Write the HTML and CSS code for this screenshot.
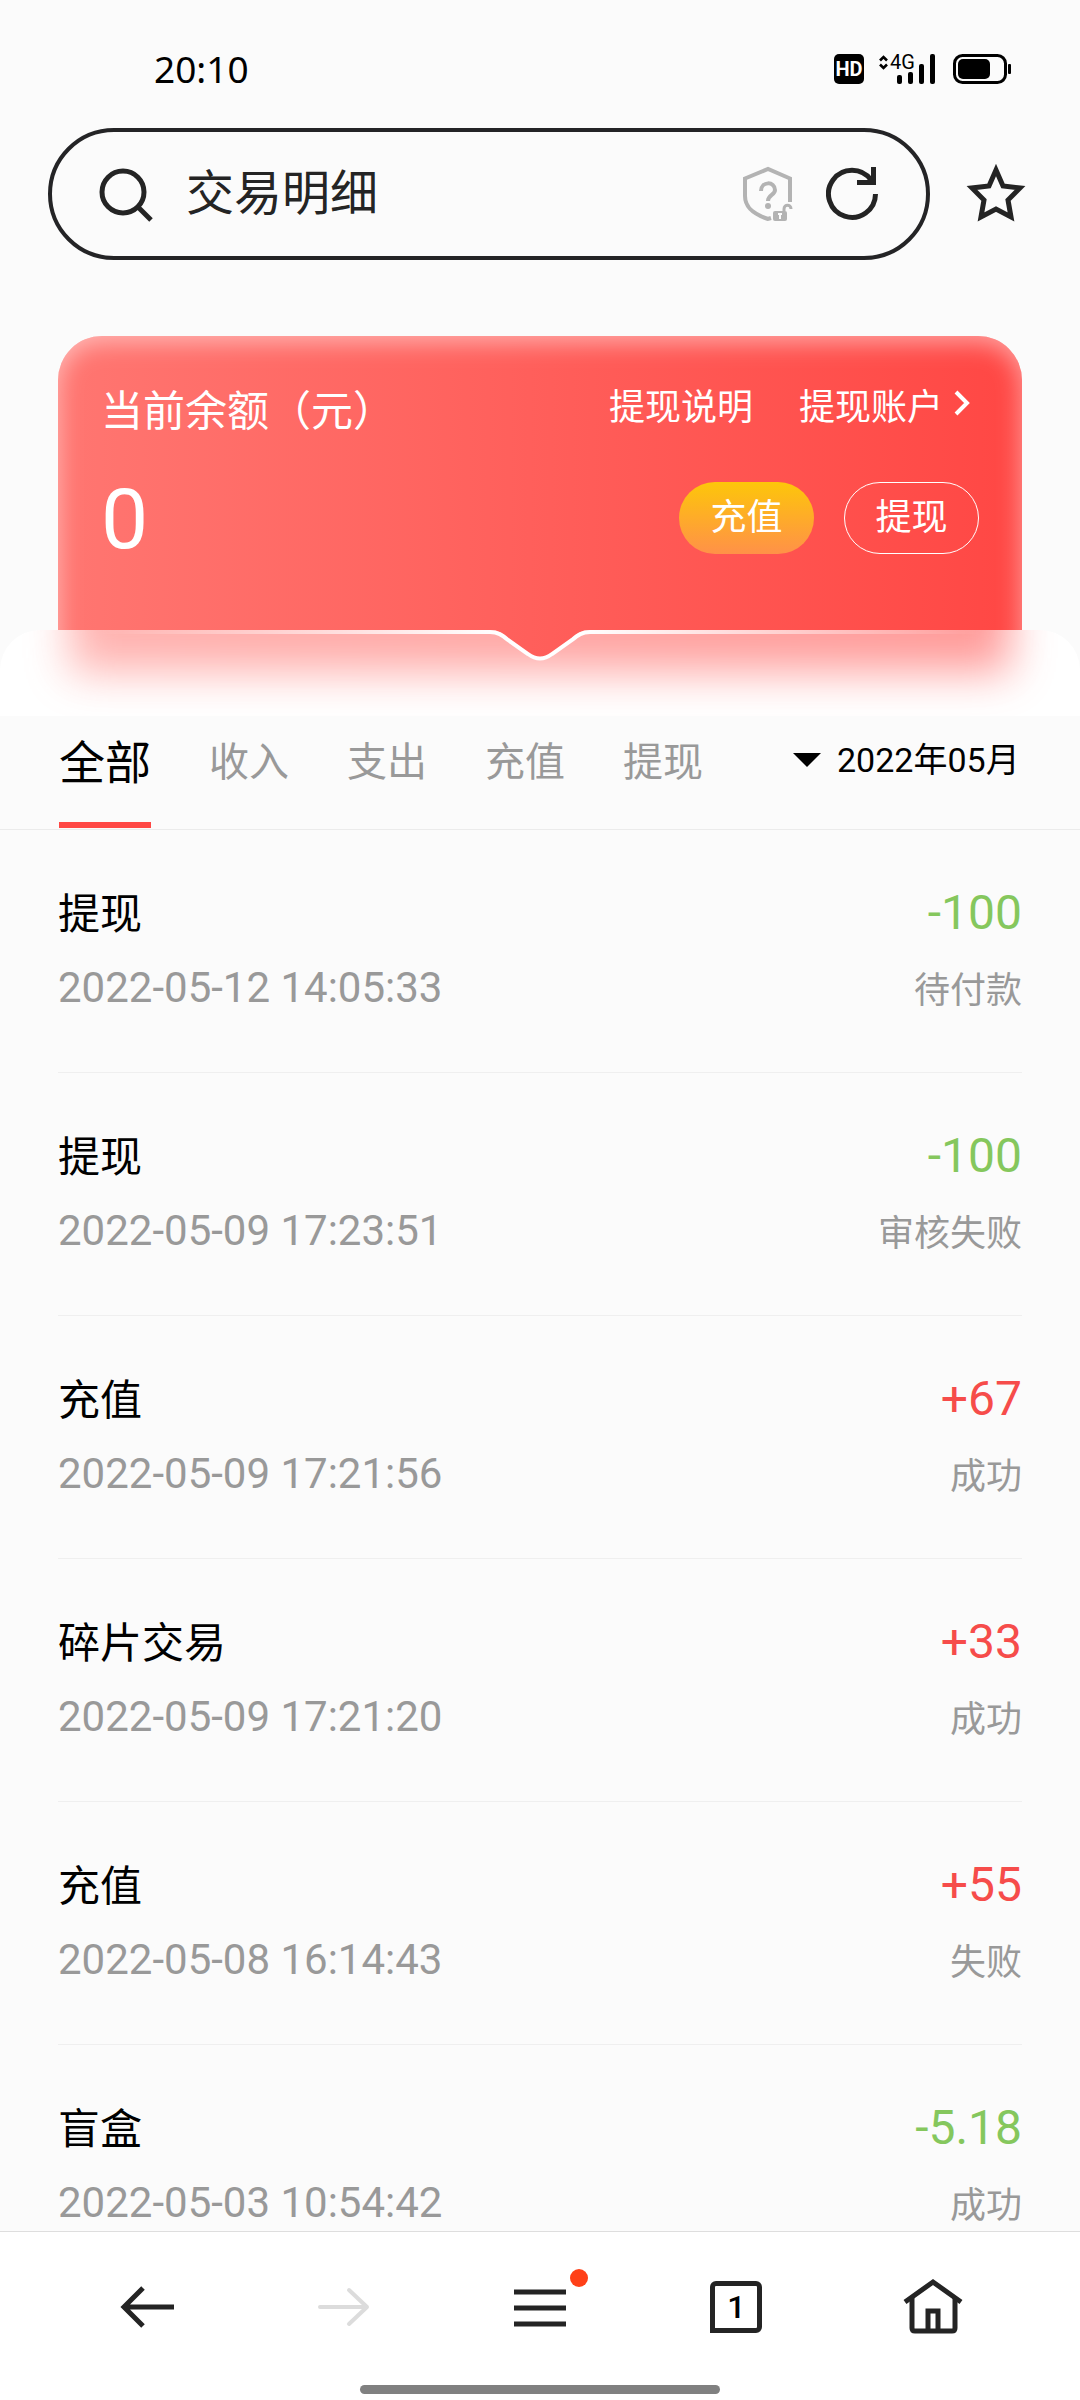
FILE: index.html
```html
<!DOCTYPE html>
<html lang="zh-CN">
<head>
    <meta charset="UTF-8">
    <meta name="viewport" content="width=device-width, initial-scale=1.0">
    <title>交易明细</title>
    <link rel="stylesheet" href="styles.css">
</head>
<body>
    <div class="status-bar">
        <time class="clock">20:10</time>
        <div class="status-icons">
            <span class="hd-badge">HD</span>
            <svg class="signal" width="56" height="30" viewBox="0 0 56 30">
                <path d="M1 6.500L4.500 3L8 6.500M1 10.500L4.500 14L8 10.500" fill="none" stroke="#000" stroke-width="2.600"/>
                <text class="signal-text" x="11" y="15">4G</text>
                <rect x="18" y="21" width="5" height="9" rx="2"/>
                <rect x="29" y="18" width="5" height="12" rx="2"/>
                <rect x="40" y="10" width="5" height="20" rx="2"/>
                <rect x="51" y="0" width="5" height="30" rx="2"/>
            </svg>
            <svg class="battery" width="58" height="30" viewBox="0 0 58 30">
                <rect x="1.500" y="1.500" width="51" height="27" rx="8" fill="none" stroke="#000" stroke-width="3"/>
                <rect x="5" y="5" width="32" height="20" rx="5"/>
                <rect x="55" y="10" width="3" height="10" rx="1"/>
            </svg>
        </div>
    </div>

    <header class="browser-bar">
        <form class="search-box">
            <svg width="56" height="56" viewBox="0 0 56 56" fill="none" stroke="#242424" stroke-width="5">
                <circle cx="25" cy="26" r="21"/>
                <path d="M40 41L53 54"/>
            </svg>
            <input class="search-input" type="text" value="交易明细" aria-label="搜索">
            <button class="icon-btn" type="button" aria-label="安全提示">
                <svg width="52" height="56" viewBox="0 0 52 56" fill="none" stroke="#b3b3b3" stroke-width="4">
                    <path d="M48 36V12.500L26 3L3 12.500V30C3 43 14 49 26 53L29 52"/>
                    <path d="M19 25C19 15 33 15 33 24C33 29 26 29 26 35"/>
                    <circle cx="26" cy="40" r="3" fill="#b3b3b3" stroke="none"/>
                    <rect x="31" y="45" width="14" height="10" rx="2" fill="#b3b3b3" stroke="none"/>
                    <path d="M42 45V43C42 38 49 38 49 43" stroke-width="3"/>
                    <path d="M36 48H40M38 48V53" stroke="#fbfbfb" stroke-width="2"/>
                </svg>
            </button>
            <button class="icon-btn" type="button" aria-label="刷新">
                <svg width="54" height="56" viewBox="0 0 54 56" fill="none" stroke="#242424" stroke-width="5">
                    <path d="M49.500 28A23.500 23.500 0 1 1 45 14"/>
                    <path d="M31 16.500H47M47.500 1V19"/>
                </svg>
            </button>
        </form>
        <button class="icon-btn" type="button" aria-label="收藏">
            <svg width="60" height="60" viewBox="0 0 60 60" fill="none" stroke="#242424" stroke-width="5">
                <path d="M30 6L37 22L54 24L42 36L45 53L30 45L15 53L18 36L6 24L23 22Z"/>
            </svg>
        </button>
    </header>

    <section class="balance">
        <div class="balance-card">
            <div class="balance-row">
                <h1 class="balance-title">当前余额（元）</h1>
                <div class="balance-links">
                    <a href="#explain">提现说明</a>
                    <a href="#account">提现账户<svg class="chevron" width="18" height="28" viewBox="0 0 18 28" fill="none" stroke="#fff" stroke-width="4"><path d="M3 3L14 14L3 25"/></svg></a>
                </div>
            </div>
            <div class="balance-row">
                <div class="balance-value">0</div>
                <div class="balance-actions">
                    <button class="pill pill-gold" type="button">充值</button>
                    <button class="pill pill-outline" type="button">提现</button>
                </div>
            </div>
        </div>
        <div class="frost"></div>
        <svg class="notch" viewBox="0 0 1080 32" preserveAspectRatio="xMidYMin slice">
            <defs>
                <linearGradient id="card" gradientUnits="userSpaceOnUse" x1="58" y1="0" x2="1022" y2="0">
                    <stop offset="0" stop-color="#ff7671"/>
                    <stop offset="1" stop-color="#ff4744"/>
                </linearGradient>
                <linearGradient id="edge" gradientUnits="userSpaceOnUse" x1="100" y1="0" x2="980" y2="0">
                    <stop offset="0" stop-color="#fff" stop-opacity="0"/>
                    <stop offset="0.450" stop-color="#fff"/>
                    <stop offset="0.550" stop-color="#fff"/>
                    <stop offset="1" stop-color="#fff" stop-opacity="0"/>
                </linearGradient>
            </defs>
            <path d="M490 0C498 0 502 3 508 8L528 23C536 29 544 29 552 23L572 8C578 3 582 0 590 0Z" fill="url(#card)"/>
            <path d="M100 2H490C498 2 502 5 508 10L528 24C536 30 544 30 552 24L572 10C578 5 582 2 590 2H980" fill="none" stroke="url(#edge)" stroke-width="4"/>
        </svg>
    </section>

    <nav class="filter-bar">
        <div class="tabs">
            <button class="tab active" type="button">全部</button>
            <button class="tab" type="button">收入</button>
            <button class="tab" type="button">支出</button>
            <button class="tab" type="button">充值</button>
            <button class="tab" type="button">提现</button>
        </div>
        <label class="month">
            <svg width="28" height="14" viewBox="0 0 28 14"><path d="M0 0H28L14 14Z"/></svg>
            <select class="month-select" aria-label="月份">
                <option>2022年05月</option>
            </select>
        </label>
    </nav>

    <ul class="records">
        <li class="record">
            <div class="record-line"><span class="name">提现</span><span class="amount out">-100</span></div>
            <div class="record-line"><time class="date">2022-05-12 14:05:33</time><span class="state">待付款</span></div>
        </li>
        <li class="record">
            <div class="record-line"><span class="name">提现</span><span class="amount out">-100</span></div>
            <div class="record-line"><time class="date">2022-05-09 17:23:51</time><span class="state">审核失败</span></div>
        </li>
        <li class="record">
            <div class="record-line"><span class="name">充值</span><span class="amount in">+67</span></div>
            <div class="record-line"><time class="date">2022-05-09 17:21:56</time><span class="state">成功</span></div>
        </li>
        <li class="record">
            <div class="record-line"><span class="name">碎片交易</span><span class="amount in">+33</span></div>
            <div class="record-line"><time class="date">2022-05-09 17:21:20</time><span class="state">成功</span></div>
        </li>
        <li class="record">
            <div class="record-line"><span class="name">充值</span><span class="amount in">+55</span></div>
            <div class="record-line"><time class="date">2022-05-08 16:14:43</time><span class="state">失败</span></div>
        </li>
        <li class="record">
            <div class="record-line"><span class="name">盲盒</span><span class="amount out">-5.18</span></div>
            <div class="record-line"><time class="date">2022-05-03 10:54:42</time><span class="state">成功</span></div>
        </li>
    </ul>

    <footer class="toolbar">
        <div class="toolbar-buttons">
            <button class="icon-btn" type="button" aria-label="后退">
                <svg width="60" height="60" viewBox="0 0 60 60" fill="none" stroke="#242424" stroke-width="5">
                    <path d="M57 30H7M26 11L7 30L26 49"/>
                </svg>
            </button>
            <button class="icon-btn" type="button" aria-label="前进" disabled>
                <svg width="60" height="60" viewBox="0 0 60 60" fill="none" stroke="#dcdcdc" stroke-width="4" stroke-linecap="round" stroke-linejoin="round">
                    <path d="M6 30H53M35 13L53 30L35 47"/>
                </svg>
            </button>
            <button class="icon-btn menu-btn" type="button" aria-label="菜单">
                <svg width="60" height="60" viewBox="0 0 60 60" fill="none" stroke="#242424" stroke-width="5">
                    <path d="M4 15H56M4 31H56M4 47H56"/>
                </svg>
                <span class="dot"></span>
            </button>
            <button class="icon-btn" type="button" aria-label="标签页">
                <span class="tab-count">1</span>
            </button>
            <button class="icon-btn" type="button" aria-label="主页">
                <svg width="60" height="60" viewBox="0 0 60 60" fill="none" stroke="#242424" stroke-width="5">
                    <path d="M2 25L30 5L58 25"/>
                    <path d="M9 21V51Q9 54 12 54H49Q52 54 52 51V21"/>
                    <path d="M25 54V34H35V54"/>
                </svg>
            </button>
        </div>
        <div class="home-indicator"></div>
    </footer>
</body>
</html>
```
FILE: styles.css
```css
* {
    margin: 0;
    padding: 0;
    box-sizing: border-box;
}

body {
    font-family: Roboto, "Noto Sans CJK SC", sans-serif;
    font-weight: 400;
    background: #fbfbfb;
    color: #000;
    height: 100vh;
    display: flex;
    flex-direction: column;
    overflow: hidden;
}

button,
input,
select {
    font: inherit;
    color: inherit;
    border: none;
    background: none;
}

a {
    color: inherit;
    text-decoration: none;
}

svg {
    display: block;
}

.status-bar {
    display: flex;
    align-items: center;
    justify-content: space-between;
    height: 128px;
    padding: 10px 69px 0 154px;
}

.clock {
    padding-bottom: 2px;
    font-family: "Noto Sans", sans-serif;
    font-size: 37px;
}

.status-icons {
    display: flex;
    align-items: center;
}

.hd-badge {
    width: 30px;
    height: 30px;
    border-radius: 5px;
    background: #000;
    color: #fff;
    font-size: 20px;
    font-weight: 700;
    line-height: 30px;
    text-align: center;
}

.signal {
    margin: 0 18px 0 15px;
    overflow: visible;
}

.signal-text {
    font-size: 20px;
}

.browser-bar {
    display: flex;
    align-items: center;
    gap: 36px;
    padding: 0 54px 0 48px;
}

.search-box {
    flex: 1;
    min-width: 0;
    display: flex;
    align-items: center;
    height: 132px;
    padding: 0 46px;
    border: 4px solid #242426;
    border-radius: 66px;
}

.search-input {
    flex: 1;
    min-width: 0;
    padding: 0 32px;
    font-size: 48px;
    line-height: 64px;
    color: #242424;
    outline: none;
}

.icon-btn {
    flex: none;
    display: flex;
    align-items: center;
    justify-content: center;
}

.search-box .icon-btn + .icon-btn {
    margin-left: 32px;
}

.balance {
    position: relative;
    margin-top: 76px;
    height: 380px;
}

.balance-card {
    height: 320px;
    margin: 0 58px;
    padding: 40px 43px 0 43px;
    border-radius: 44px 44px 0 0;
    background: linear-gradient(90deg, #ff7671, #ff4744);
    box-shadow: inset 0 6px 24px rgba(255, 255, 255, 0.5);
    clip-path: inset(0 0 26px 0);
    color: #fff;
}

.balance-row {
    display: flex;
    align-items: center;
    justify-content: space-between;
}

.balance-title {
    font-size: 42px;
    font-weight: 400;
    line-height: 72px;
}

.balance-links {
    display: flex;
    gap: 46px;
    padding-bottom: 8px;
    font-size: 36px;
    line-height: 60px;
}

.balance-links a {
    display: flex;
    align-items: center;
}

.chevron {
    margin: 0 8px 10px 10px;
}

.balance-value {
    font-size: 84px;
    line-height: 144px;
}

.balance-actions {
    display: flex;
    gap: 30px;
    padding-bottom: 4px;
}

.pill {
    width: 135px;
    height: 72px;
    border-radius: 36px;
    font-size: 36px;
    line-height: 70px;
}

.pill-gold {
    background: linear-gradient(180deg, #fdc60a, #ff9148);
}

.pill-outline {
    border: 1px solid #fff;
}

/* frosted strip under the card, tinted by a blurred copy of its gradient */
.frost {
    position: absolute;
    left: 0;
    right: 0;
    bottom: 0;
    height: 86px;
    border-radius: 40px 40px 0 0;
    background: #fff;
    overflow: hidden;
}

.frost::before {
    content: "";
    position: absolute;
    top: -80px;
    left: 70px;
    right: 70px;
    bottom: 44px;
    background: linear-gradient(90deg, #ff7671, #ff4744);
    filter: blur(22px);
    opacity: 0.55;
}

.notch {
    position: absolute;
    left: 0;
    bottom: 54px;
    width: 100%;
    height: 32px;
}

.filter-bar {
    display: flex;
    justify-content: space-between;
    height: 114px;
    padding: 0 60px 1px 59px;
    border-bottom: 1px solid #ebebeb;
}

.tabs {
    display: flex;
    gap: 58px;
}

.tab {
    padding-bottom: 20px;
    font-size: 40px;
    color: #999;
    border-bottom: 6px solid transparent;
}

.tab.active {
    font-size: 46px;
    color: #000;
    border-bottom-color: #ff4744;
}

.month {
    display: flex;
    align-items: center;
    gap: 16px;
    padding-bottom: 24px;
    font-size: 34px;
}

.month-select {
    appearance: none;
    line-height: 52px;
}

.records {
    flex: 1;
    min-height: 0;
    overflow: hidden;
    padding: 0 58px;
    list-style: none;
}

.record {
    height: 243px;
    padding-top: 45px;
    border-bottom: 1px solid #efefef;
}

.record-line {
    display: flex;
    align-items: center;
    justify-content: space-between;
    height: 75px;
}

.name {
    padding-bottom: 5px;
    font-size: 42px;
}

.amount {
    font-size: 48px;
}

.out {
    color: #85c75d;
}

.in {
    color: #f64c4a;
}

.date {
    font-size: 42px;
    color: #999;
}

.state {
    padding-bottom: 2px;
    font-size: 36px;
    color: #999;
}

.toolbar {
    height: 169px;
    padding: 0 49px;
    border-top: 1px solid #dedede;
    background: #fff;
}

.toolbar-buttons {
    display: grid;
    grid-template-columns: repeat(5, 1fr);
    height: 149px;
}

.menu-btn {
    position: relative;
}

.dot {
    position: absolute;
    top: 37px;
    left: calc(50% + 30px);
    width: 18px;
    height: 18px;
    border-radius: 50%;
    background: #ff4018;
}

.tab-count {
    width: 52px;
    height: 52px;
    border: 5px solid #242424;
    border-radius: 6px 6px 6px 0;
    font-size: 32px;
    font-weight: 500;
    line-height: 42px;
}

.home-indicator {
    width: 360px;
    height: 9px;
    margin: 4px auto 0;
    border-radius: 5px;
    background: #808080;
}
```
